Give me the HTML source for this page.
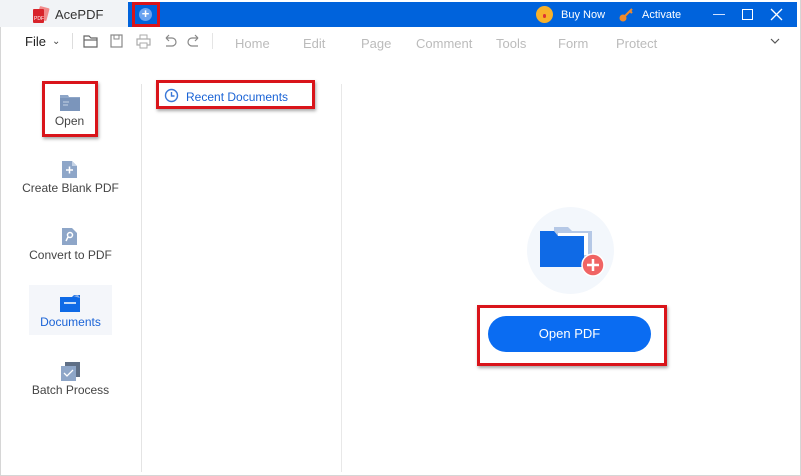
<!DOCTYPE html>
<html><head><meta charset="utf-8"><style>
*{margin:0;padding:0;box-sizing:border-box}
body{width:801px;height:476px;background:#fff;font-family:"Liberation Sans",sans-serif;position:relative;overflow:hidden}
.a{position:absolute}
.t{font-size:12px;color:#333;white-space:nowrap}
.menu{font-size:13px;color:#bbb}
.red{position:absolute;border:3px solid #d9141a;box-shadow:1px 2px 3px rgba(0,0,0,.35)}
.side{position:absolute;left:0;width:141px;text-align:center;font-size:12px;color:#444}
</style></head><body>
<div class="a" style="left:0;top:0;width:801px;height:476px;border:1px solid #d6d6d6;border-top:none"></div>
<div class="a" style="left:0;top:0;width:128px;height:27px;background:#f1f3f6"></div>
<div class="a" style="left:128px;top:2px;width:669px;height:25px;background:#0063dc"></div>
<svg class="a" style="left:31px;top:6px" width="20" height="18"><rect x="7" y="1" width="10" height="13" rx="1" fill="#f08a8a" transform="rotate(15 12 8)"/><rect x="2" y="3" width="11" height="14" rx="1" fill="#d8232a"/><text x="3" y="14" font-size="5" fill="#fff" font-family="Liberation Sans">PDF</text></svg>
<div class="a t" style="left:55px;top:7px;font-size:13px;color:#333">AcePDF</div>
<div class="red" style="left:132px;top:2px;width:28px;height:25px;box-shadow:none"></div>
<div class="a" style="left:139px;top:8px;width:13px;height:13px;border-radius:50%;background:#6aa3f0;color:#fff;font-size:13px;line-height:12px;text-align:center;font-weight:bold">+</div>
<div class="a" style="left:536px;top:6px;width:17px;height:17px;border-radius:50%;background:#f8b12a"></div>
<div class="a" style="left:543px;top:14px;width:3px;height:4px;border-radius:2px;background:#d33"></div>
<div class="a t" style="left:561px;top:9px;font-size:11px;color:#fff">Buy Now</div>
<svg class="a" style="left:619px;top:7px" width="16" height="16"><circle cx="4" cy="11" r="3.5" fill="#f08a2a"/><path d="M6 9L13 2M11 4l2 2" stroke="#f08a2a" stroke-width="2" fill="none"/></svg>
<div class="a t" style="left:642px;top:9px;font-size:11px;color:#fff">Activate</div>
<div class="a" style="left:713px;top:14px;width:12px;height:1px;background:#cfe0ff"></div>
<div class="a" style="left:742px;top:9px;width:11px;height:11px;border:1.3px solid #fff"></div>
<svg class="a" style="left:770px;top:8px" width="13" height="13"><path d="M1 1L12 12M12 1L1 12" stroke="#fff" stroke-width="1.3"/></svg>
<div class="a t" style="left:25px;top:34px;font-size:13px;color:#222">File</div>
<div class="a t" style="left:52px;top:36px;font-size:10px;color:#444">⌄</div>
<div class="a" style="left:72px;top:33px;width:1px;height:16px;background:#ddd"></div>
<svg class="a" style="left:83px;top:33px" width="120" height="16"><path d="M1 3h5l2 2h6v9H1z" fill="none" stroke="#666" stroke-width="1.2"/><path d="M1 7h13" stroke="#666" stroke-width="1.2"/><rect x="28" y="2" width="11" height="12" fill="none" stroke="#888" stroke-width="1.2"/><rect x="31" y="2" width="5" height="4" fill="none" stroke="#888"/><rect x="54" y="6" width="13" height="6" fill="none" stroke="#aaa" stroke-width="1.2"/><rect x="57" y="2" width="7" height="4" fill="none" stroke="#aaa"/><rect x="57" y="10" width="7" height="5" fill="#fff" stroke="#aaa"/><path d="M83 5h6a4 4 0 010 8h-6M83 5l3-3M83 5l3 3" fill="none" stroke="#888" stroke-width="1.2"/><path d="M115 5h-6a4 4 0 000 8h6M115 5l-3-3M115 5l-3 3" fill="none" stroke="#888" stroke-width="1.2"/></svg>
<div class="a" style="left:212px;top:33px;width:1px;height:16px;background:#e5e5e5"></div>
<div class="a menu" style="left:235px;top:36px">Home</div>
<div class="a menu" style="left:303px;top:36px">Edit</div>
<div class="a menu" style="left:361px;top:36px">Page</div>
<div class="a menu" style="left:416px;top:36px">Comment</div>
<div class="a menu" style="left:496px;top:36px">Tools</div>
<div class="a menu" style="left:558px;top:36px">Form</div>
<div class="a menu" style="left:616px;top:36px">Protect</div>
<svg class="a" style="left:770px;top:38px" width="10" height="7"><path d="M1 1l4 4 4-4" stroke="#555" fill="none" stroke-width="1.2"/></svg>
<div class="a" style="left:141px;top:84px;width:1px;height:388px;background:#e4e4e4"></div>
<div class="a" style="left:341px;top:84px;width:1px;height:388px;background:#e8e8e8"></div>
<div class="red" style="left:42px;top:81px;width:56px;height:56px"></div>
<svg class="a" style="left:60px;top:94px" width="20" height="17"><path d="M0 1h8l1 2h11v14H0z" fill="#8ea6c8"/><rect x="0" y="4" width="20" height="13" fill="#7b95bb"/><path d="M3 8h6M3 11h5" stroke="#c5d3e6"/></svg>
<div class="side" style="top:114px;left:-1px">Open</div>
<svg class="a" style="left:62px;top:161px" width="15" height="17"><path d="M0 0h10l5 5v12H0z" fill="#8ea6c8"/><path d="M10 0v5h5" fill="#c5d3e6"/><path d="M4 9h7M7.5 5.5v7" stroke="#fff" stroke-width="1.5"/></svg>
<div class="side" style="top:181px">Create Blank PDF</div>
<svg class="a" style="left:62px;top:228px" width="15" height="17"><path d="M0 0h10l5 5v12H0z" fill="#8ea6c8"/><circle cx="8" cy="7" r="2.5" fill="none" stroke="#fff" stroke-width="1.5"/><path d="M6 9l-2 4" stroke="#fff" stroke-width="1.5"/></svg>
<div class="side" style="top:248px">Convert to PDF</div>
<div class="a" style="left:29px;top:285px;width:83px;height:50px;background:#f4f6fa"></div>
<svg class="a" style="left:60px;top:295px" width="20" height="17"><path d="M0 2h12l2-2h6v17H0z" fill="#0f6ae6"/><path d="M13 1l5-1 2 3z" fill="#8fb3ea"/><path d="M4 8h12" stroke="#fff" stroke-width="1.5"/></svg>
<div class="side" style="top:315px;color:#1a63d6">Documents</div>
<svg class="a" style="left:61px;top:362px" width="19" height="19"><rect x="4" y="0" width="15" height="15" fill="#5f6f86"/><rect x="0" y="4" width="15" height="15" fill="#8ea6c8"/><path d="M3 11l3 3 6-6" stroke="#fff" fill="none" stroke-width="1.3"/></svg>
<div class="side" style="top:383px">Batch Process</div>
<div class="red" style="left:156px;top:80px;width:159px;height:29px"></div>
<svg class="a" style="left:164px;top:88px" width="15" height="15"><circle cx="7.5" cy="7.5" r="6" fill="none" stroke="#3a78d8" stroke-width="1.4"/><path d="M7.5 4v4h3" stroke="#3a78d8" fill="none" stroke-width="1.4"/></svg>
<div class="a t" style="left:186px;top:90px;color:#1a63d6">Recent Documents</div>
<div class="a" style="left:527px;top:207px;width:87px;height:87px;border-radius:50%;background:#f3f7fc"></div>
<svg class="a" style="left:538px;top:225px" width="72" height="55"><path d="M16 2h14l4 4h20v30H16z" fill="#b5c8e6"/><rect x="20" y="8" width="30" height="22" fill="#fff"/><path d="M2 6h14l4 5h26v31H2z" fill="#0f6ae6"/><circle cx="55" cy="40" r="11" fill="#f06464" stroke="#fff" stroke-width="1.5"/><path d="M49 40h12M55 34v12" stroke="#fff" stroke-width="2.5"/></svg>
<div class="red" style="left:477px;top:305px;width:190px;height:61px"></div>
<div class="a" style="left:488px;top:316px;width:163px;height:36px;border-radius:18px;background:#0a6cf2;color:#fff;font-size:13px;text-align:center;line-height:36px">Open PDF</div>
</body></html>
